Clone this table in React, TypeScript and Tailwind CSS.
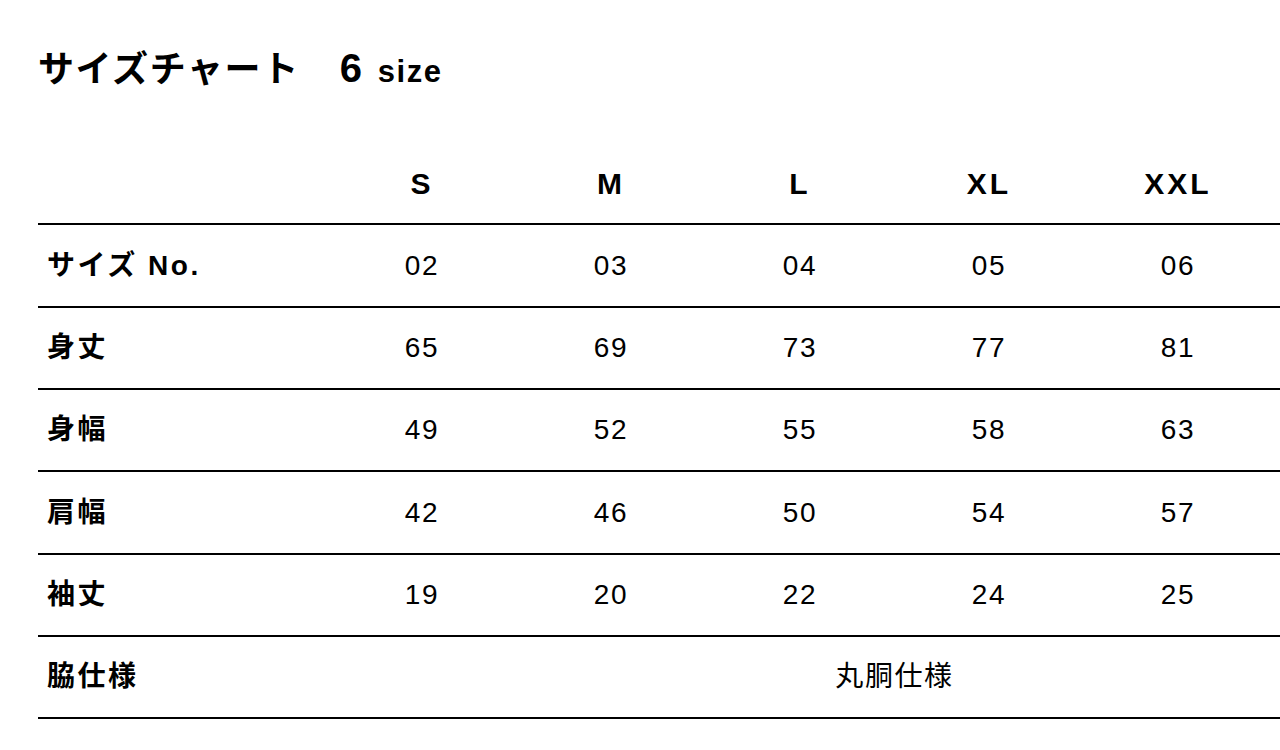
import React from "react";

const sizes = ["S", "M", "L", "XL", "XXL", "XXXL"];
const rows: { label: string; values: string[]; h: string }[] = [
  { label: "サイズ No.", values: ["02", "03", "04", "05", "06", "07"], h: "h-[83px]" },
  { label: "身丈", values: ["65", "69", "73", "77", "81", "85"], h: "h-[82px]" },
  { label: "身幅", values: ["49", "52", "55", "58", "63", "68"], h: "h-[82px]" },
  { label: "肩幅", values: ["42", "46", "50", "54", "57", "61"], h: "h-[83px]" },
  { label: "袖丈", values: ["19", "20", "22", "24", "25", "26"], h: "h-[82px]" },
];

const font = { fontFamily: '"Liberation Sans", "Noto Sans CJK JP", sans-serif' };

export default function App() {
  return (
    <div className="w-[1280px] h-[750px] overflow-hidden bg-white text-black" style={font}>
      <div className="pl-[38px] pt-[46px]">
        <h1 className="flex items-baseline font-bold leading-[44px] tracking-[0.1em]">
          <span className="text-[36px]">サイズチャート</span>
          <span className="ml-[40px] text-[40px]">6</span>
          <span className="ml-[14px] text-[31px]">size</span>
        </h1>
        <table className="mt-[47px] w-[1422px] table-fixed border-collapse tracking-[0.1em]">
          <colgroup>
            <col className="w-[288px]" />
            {sizes.map((s) => (
              <col key={s} className="w-[189px]" />
            ))}
          </colgroup>
          <thead>
            <tr className="h-[83px] border-b-2 border-black">
              <th />
              {sizes.map((s) => (
                <th
                  key={s}
                  className="pl-[3px] pt-[2px] text-center align-middle text-[30px] font-bold tracking-[0.1em]"
                >
                  {s}
                </th>
              ))}
            </tr>
          </thead>
          <tbody>
            {rows.map((r) => (
              <tr key={r.label} className={`${r.h} border-b-2 border-black`}>
                <td className="pl-[9px] text-left align-middle text-[28px] font-bold tracking-[0.09em]">
                  {r.label}
                </td>
                {r.values.map((v, i) => (
                  <td key={i} className="pl-[3px] text-center align-middle text-[28px] font-normal">
                    {v}
                  </td>
                ))}
              </tr>
            ))}
            <tr className="h-[82px] border-b-2 border-black">
              <td className="pl-[9px] text-left align-middle text-[28px] font-bold tracking-[0.09em]">
                脇仕様
              </td>
              <td colSpan={6} className="pl-[3px] text-center align-middle text-[28px] font-normal">
                丸胴仕様
              </td>
            </tr>
          </tbody>
        </table>
      </div>
    </div>
  );
}
